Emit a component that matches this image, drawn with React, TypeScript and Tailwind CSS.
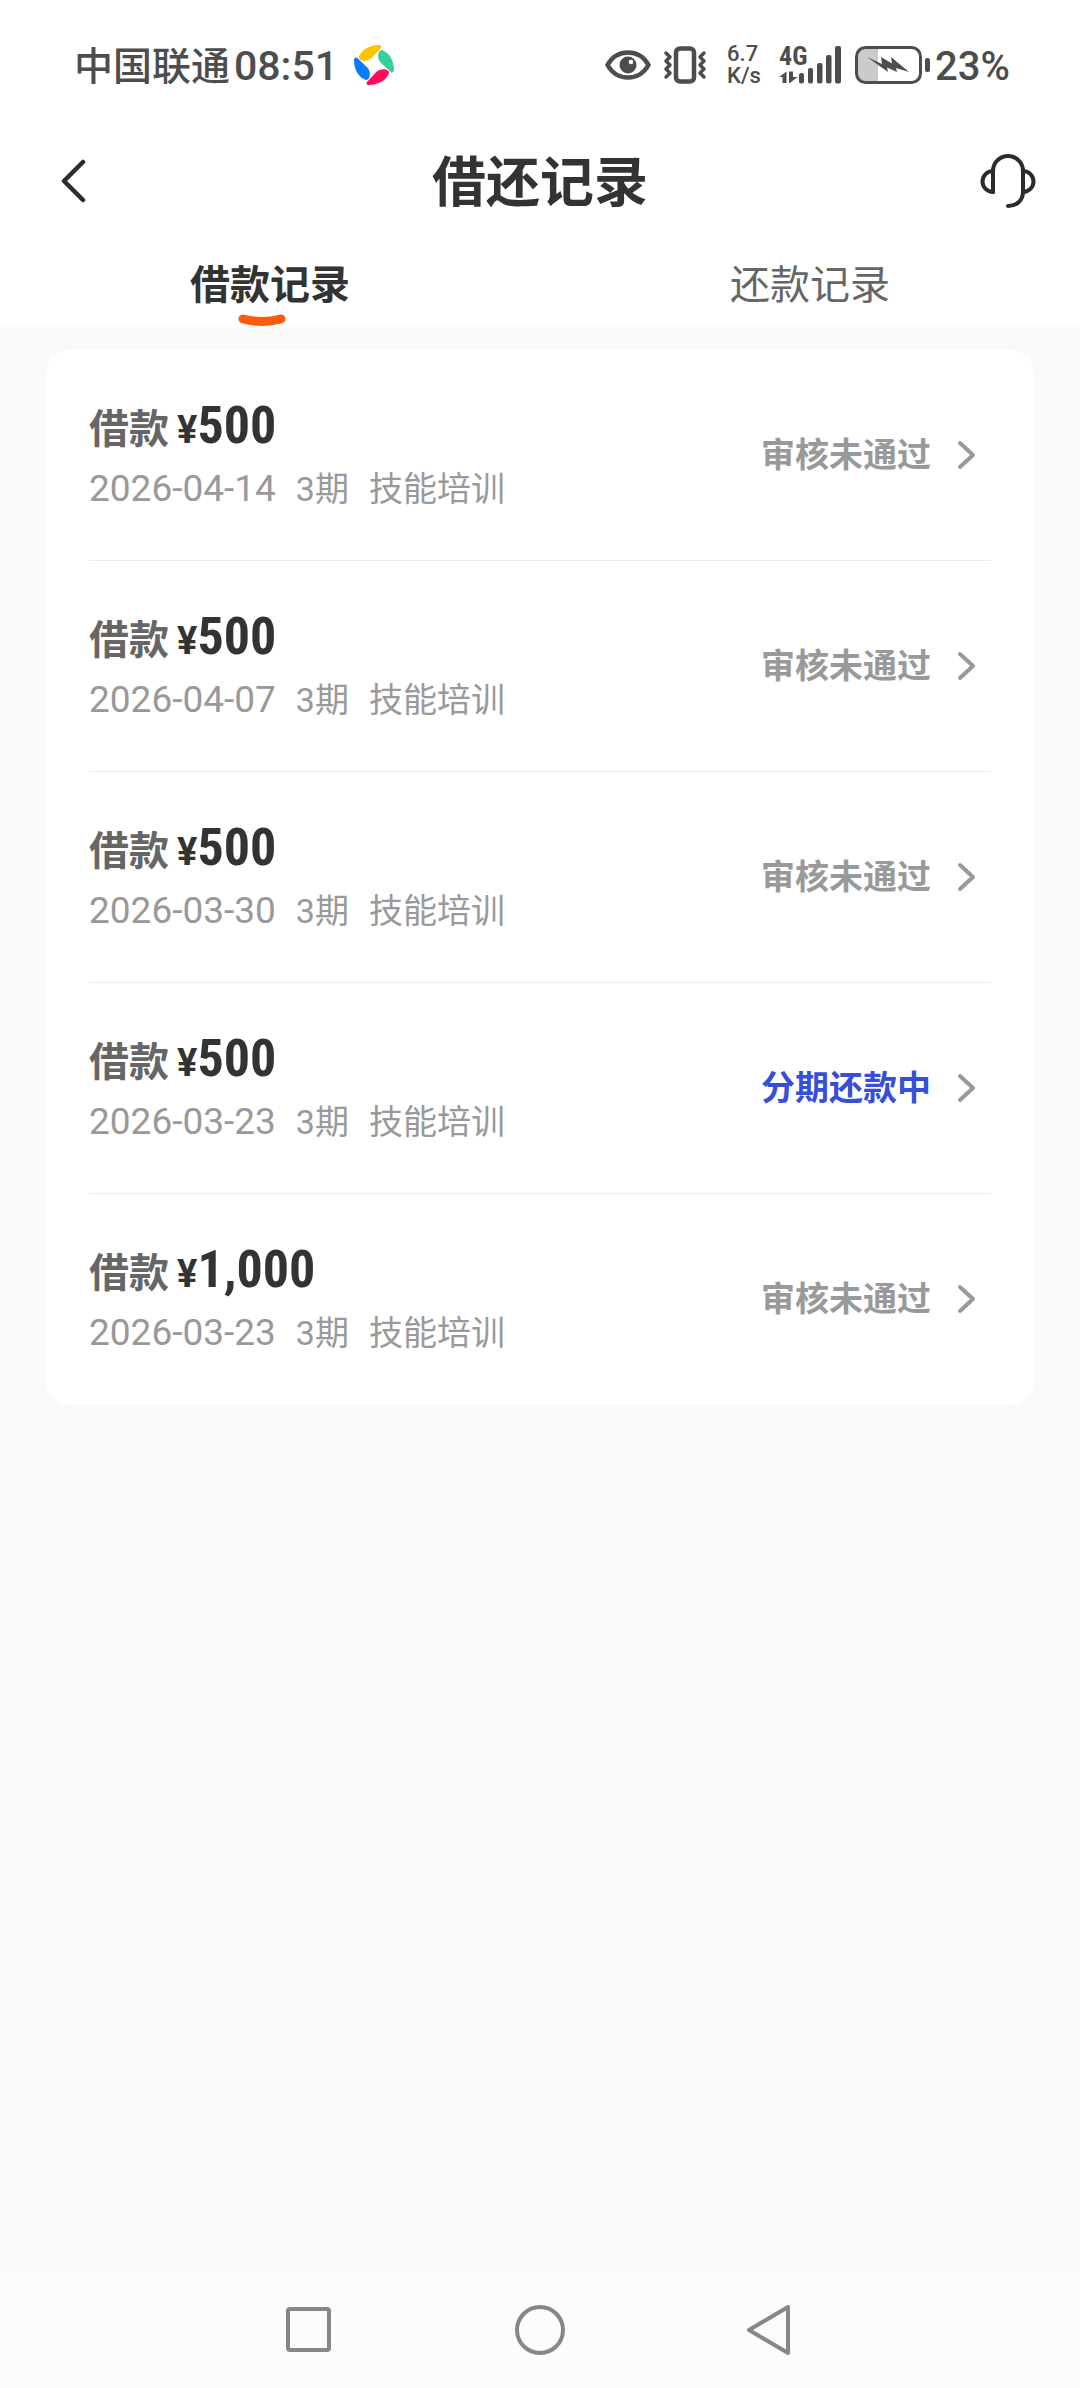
import React from "react";
import clsx from "clsx";

type LoanRecord = {
  id: number;
  amount: string;
  date: string;
  periods: string;
  purpose: string;
  status: string;
  active?: boolean;
};

const records: LoanRecord[] = [
  { id: 1, amount: "500", date: "2026-04-14", periods: "3期", purpose: "技能培训", status: "审核未通过" },
  { id: 2, amount: "500", date: "2026-04-07", periods: "3期", purpose: "技能培训", status: "审核未通过" },
  { id: 3, amount: "500", date: "2026-03-30", periods: "3期", purpose: "技能培训", status: "审核未通过" },
  { id: 4, amount: "500", date: "2026-03-23", periods: "3期", purpose: "技能培训", status: "分期还款中", active: true },
  { id: 5, amount: "1,000", date: "2026-03-23", periods: "3期", purpose: "技能培训", status: "审核未通过" },
];

function AppLogo() {
  const petal =
    "M5 11C8 4 16 0 24 0C27 0 27.500 2.500 25.500 4L17 13C13 17 3.500 16 5 11Z";
  return (
    <svg width="40" height="40" viewBox="0 0 39 39">
      <path d={petal} fill="#f9c400" />
      <path d={petal} fill="#35d09c" transform="rotate(90 19.5 19.5)" />
      <path d={petal} fill="#ff0f5b" transform="rotate(180 19.5 19.5)" />
      <path d={petal} fill="#0a7bff" transform="rotate(270 19.5 19.5)" />
    </svg>
  );
}

function EyeIcon() {
  return (
    <svg width="46" height="32" viewBox="0 0 46 32" fill="none">
      <path
        d="M2.500 16C7 8 14 3.500 23 3.500S39 8 43.500 16C39 24 32 28.500 23 28.500S7 24 2.500 16Z"
        stroke="#4d4d4d"
        strokeWidth="4.500"
        strokeLinejoin="round"
      />
      <circle cx="23" cy="16" r="8.500" fill="#4d4d4d" />
      <circle cx="26" cy="13" r="2.300" fill="#fff" />
    </svg>
  );
}

function VibrateIcon() {
  return (
    <svg width="44" height="38" viewBox="0 0 44 38" fill="none" stroke="#4d4d4d">
      <rect x="13" y="2.500" width="18" height="33" rx="4" strokeWidth="4.500" />
      <path d="M3 7l4 4-4 4 4 4-4 4 4 4-4 4" strokeWidth="3.500" strokeLinejoin="round" strokeLinecap="round" />
      <path d="M41 7l-4 4 4 4-4 4 4 4-4 4 4 4" strokeWidth="3.500" strokeLinejoin="round" strokeLinecap="round" />
    </svg>
  );
}

function SignalIcon() {
  return (
    <svg width="64" height="38" viewBox="0 0 64 38" fill="#4d4d4d">
      <path d="M0 31L7.500 25.500V37H3.500V31Z" />
      <path d="M10 25.500H14V31H18.500L11 37H10Z" />
      <rect x="20" y="27" width="5" height="10.500" rx="2" />
      <rect x="29" y="22" width="5" height="15.500" rx="2" />
      <rect x="38" y="17" width="5.500" height="20.500" rx="2" />
      <rect x="47" y="9" width="5.500" height="28.500" rx="2" />
      <rect x="56" y="0" width="6" height="37.500" rx="2" />
    </svg>
  );
}

function BatteryIcon() {
  return (
    <svg width="76" height="38" viewBox="0 0 76 38" fill="none">
      <path d="M10 2H23V36H10A8 8 0 0 1 2 28V10A8 8 0 0 1 10 2Z" fill="#cbcbcb" />
      <rect x="1.500" y="1.500" width="64" height="35" rx="9" stroke="#4d4d4d" strokeWidth="3" />
      <rect x="70" y="12" width="5" height="14" rx="2" fill="#4d4d4d" />
      <path
        d="M12 11L27 18L26 11L37 17.500L36 11L54 26L41 22L42 26L32 21.500L33 26Z"
        fill="#4d4d4d"
      />
    </svg>
  );
}

function StatusBar() {
  return (
    <div className="flex h-[130px] items-center justify-between pr-[70px] pl-[74px] text-[40px] font-medium text-[#4d4d4d]">
      <div className="flex items-center">
        <span className="pt-1 text-[39px]">中国联通</span>
        <span className="mr-4 ml-1 pt-1 text-[41px]">08:51</span>
        <AppLogo />
      </div>
      <div className="flex items-center">
        <EyeIcon />
        <div className="ml-3">
          <VibrateIcon />
        </div>
        <div className="ml-5 flex w-10 flex-col text-[22px] leading-[22px]">
          <span>6.7</span>
          <span>K/s</span>
        </div>
        <div className="relative ml-3">
          <SignalIcon />
          <span className="absolute -top-1 left-0 font-['Roboto_Condensed',Roboto,sans-serif] text-[26px] leading-7 font-bold">
            4G
          </span>
        </div>
        <div className="ml-3">
          <BatteryIcon />
        </div>
        <span className="ml-1 pt-1">23%</span>
      </div>
    </div>
  );
}

function Header() {
  return (
    <header className="grid h-[102px] grid-cols-[1fr_auto_1fr] items-center px-11">
      <button type="button" aria-label="返回" className="justify-self-start pl-4">
        <svg width="28" height="44" viewBox="0 0 28 44" fill="none">
          <path d="M23 3L4 22L23 41" stroke="#2b2b2b" strokeWidth="4.500" strokeLinecap="round" strokeLinejoin="round" />
        </svg>
      </button>
      <h1 className="pt-1 text-[54px] font-bold text-[#333]">借还记录</h1>
      <button type="button" aria-label="客服" className="justify-self-end">
        <svg
          width="56"
          height="56"
          viewBox="0 0 56 56"
          fill="none"
          stroke="#2b2b2b"
          strokeWidth="4"
          strokeLinecap="round"
          strokeLinejoin="round"
        >
          <path d="M13 39V18A15 15 0 0 1 43 18V39C43 47 37 53 28 53" />
          <path d="M13 18A10.500 10.500 0 0 0 13 39" />
          <path d="M43 18A10.500 10.500 0 0 1 43 39" />
        </svg>
      </button>
    </header>
  );
}

function Tabs() {
  return (
    <div role="tablist" className="grid h-[95px] grid-cols-2 text-[40px]">
      <button type="button" role="tab" aria-selected="true" className="relative pt-3 font-bold text-[#333]">
        借款记录
        <svg className="absolute bottom-0 left-[44%]" width="48" height="14" viewBox="0 0 48 14" fill="none">
          <path d="M5 6Q24 11 43 6" stroke="#ff5a0a" strokeWidth="9" strokeLinecap="round" />
        </svg>
      </button>
      <button type="button" role="tab" aria-selected="false" className="pt-3 text-[#666]">
        还款记录
      </button>
    </div>
  );
}

function RecordRow({ record }: { record: LoanRecord }) {
  return (
    <li className="border-b border-[#ebebeb] last:border-transparent">
      <a href="#" className="flex h-[210px] items-center justify-between pr-3">
        <div className="pt-1">
          <p className="flex items-baseline leading-[60px] font-bold">
            <span className="text-[40px] text-[#666]">借款</span>
            <span className="ml-2 text-[38px] text-[#333]">¥</span>
            <span className="font-['Roboto_Condensed',Roboto,sans-serif] text-[52px] text-[#333]">{record.amount}</span>
          </p>
          <p className="flex items-baseline text-[34px] leading-[58px] text-[#999]">
            <span className="text-[37px]">{record.date}</span>
            <span className="ml-5">{record.periods}</span>
            <span className="ml-5">{record.purpose}</span>
          </p>
        </div>
        <div className="flex items-center gap-6">
          <span className={clsx("text-[34px] font-bold", record.active ? "text-[#364fd9]" : "text-[#999]")}>
            {record.status}
          </span>
          <svg width="24" height="32" viewBox="0 0 24 32" fill="none">
            <path d="M5 4L18 16L5 28" stroke="#999" strokeWidth="4" strokeLinecap="round" strokeLinejoin="round" />
          </svg>
        </div>
      </a>
    </li>
  );
}

function NavBar() {
  return (
    <nav className="grid h-[116px] grid-cols-3 items-center justify-items-center bg-[#fcfcfc] px-48">
      <button type="button" aria-label="最近任务">
        <svg width="52" height="52" viewBox="0 0 52 52" fill="none" stroke="#878787" strokeWidth="4">
          <rect x="6" y="5" width="41" height="41" rx="2" />
        </svg>
      </button>
      <button type="button" aria-label="主页">
        <svg width="52" height="52" viewBox="0 0 52 52" fill="none" stroke="#878787" strokeWidth="4">
          <circle cx="26" cy="26" r="23" />
        </svg>
      </button>
      <button type="button" aria-label="后退">
        <svg width="52" height="52" viewBox="0 0 52 52" fill="none" stroke="#878787" strokeWidth="4" strokeLinejoin="round">
          <path d="M42 3V49L3 26Z" />
        </svg>
      </button>
    </nav>
  );
}

export default function App() {
  return (
    <div className="flex min-h-screen flex-col bg-[#f9f9f9] font-[Roboto,'Noto_Sans_CJK_SC',sans-serif]">
      <div className="bg-white">
        <StatusBar />
        <Header />
        <Tabs />
      </div>
      <main className="flex-1 px-[46px] py-[23px]">
        <ul className="rounded-3xl bg-white px-[43px]">
          {records.map((record) => (
            <RecordRow key={record.id} record={record} />
          ))}
        </ul>
      </main>
      <NavBar />
    </div>
  );
}
